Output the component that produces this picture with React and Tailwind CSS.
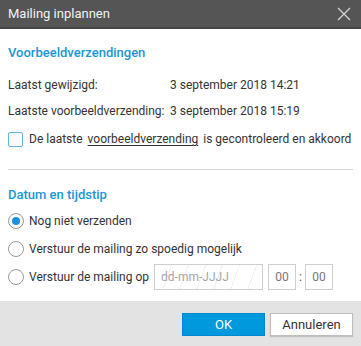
import React from "react";

function Radio({ checked, label, children }) {
  return (
    <div className="flex items-center h-[28px] whitespace-nowrap">
      <span className="w-[16px] h-[16px] rounded-full border border-[#9a9a9a] bg-white flex items-center justify-center shrink-0">
        {checked && <span className="w-[8px] h-[8px] rounded-full bg-[#1e90e0]" />}
      </span>
      <span className="ml-[5px] text-[#333]">{label}</span>
      {children}
    </div>
  );
}

export default function App() {
  return (
    <div
      className="w-[361px] h-[346px] flex flex-col bg-white text-[12px] text-[#333]"
      style={{ fontFamily: "Roboto, 'Liberation Sans', sans-serif" }}
    >
      <div className="h-[29px] shrink-0 bg-[#555555] border-b-2 border-[#454545] flex items-center justify-between pl-[8px] pr-[10px]">
        <span className="text-[13px] text-[#f2f2f2]">Mailing inplannen</span>
        <svg width="14" height="14" viewBox="0 0 14 14" className="text-[#d0d0d0]">
          <path d="M1 1 L13 13 M13 1 L1 13" stroke="currentColor" strokeWidth="1.4" />
        </svg>
      </div>
      <div className="flex-1 px-[8px]">
        <div className="mt-[15px] h-[18px] flex items-center text-[13px] font-medium text-[#1a96d8]">
          Voorbeeldverzendingen
        </div>
        <div className="mt-[10px] flex h-[26px] items-center whitespace-nowrap">
          <span className="w-[162px]">Laatst gewijzigd:</span>
          <span>3 september 2018 14:21</span>
        </div>
        <div className="flex h-[26px] items-center whitespace-nowrap">
          <span className="w-[162px]">Laatste voorbeeldverzending:</span>
          <span>3 september 2018 15:19</span>
        </div>
        <div className="flex h-[30px] items-center whitespace-nowrap">
          <span className="w-[15px] h-[15px] rounded-[2px] border border-[#60b4ea] bg-[#f9f9f9] shrink-0" />
          <span className="ml-[6px]">
            De laatste{" "}
            <span className="underline underline-offset-2 mx-[2px]">voorbeeldverzending</span>{" "}
            is gecontroleerd en akkoord
          </span>
        </div>
        <div className="mt-[15px] border-t border-[#d4d4d4]" />
        <div className="mt-[16px] h-[18px] flex items-center text-[13px] font-medium text-[#1a96d8]">
          Datum en tijdstip
        </div>
        <div className="mt-[3px]">
          <Radio checked label="Nog niet verzenden" />
          <Radio label="Verstuur de mailing zo spoedig mogelijk" />
          <Radio label="Verstuur de mailing op">
            <div className="ml-[5px] w-[109px] h-[26px] border border-[#cfcfcf] flex items-center pl-[6px] text-[#a5a5a5] bg-[repeating-linear-gradient(110deg,transparent_0px,transparent_15px,#f0f0f0_15px,#f0f0f0_16px)]">
              dd-mm-JJJJ
            </div>
            <div className="ml-[5px] w-[28px] h-[26px] border border-[#cfcfcf] flex items-center justify-center text-[#777]">
              00
            </div>
            <span className="mx-[3px] text-[#555]">:</span>
            <div className="w-[28px] h-[26px] border border-[#cfcfcf] flex items-center justify-center text-[#777]">
              00
            </div>
          </Radio>
        </div>
      </div>
      <div className="h-[45px] shrink-0 bg-[#e3e3e3] flex items-start justify-end pt-[12px] pr-[8px] gap-[5px]">
        <button className="w-[83px] h-[23px] bg-[#0099dd] text-white border border-[#0088cc] text-[13px]">
          OK
        </button>
        <button className="w-[83px] h-[23px] bg-white text-[#333] border border-[#bdbdbd] shadow-[0_1px_1px_rgba(0,0,0,0.15)] text-[13px]">
          Annuleren
        </button>
      </div>
    </div>
  );
}
